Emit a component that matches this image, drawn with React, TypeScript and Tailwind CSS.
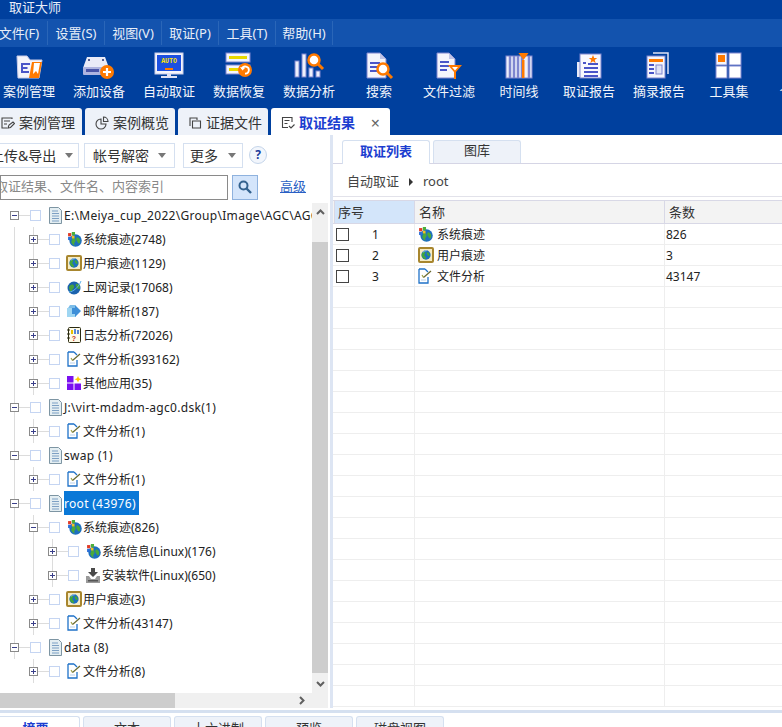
import React from "react";

const FONT = "font-['Noto_Sans','Noto_Sans_CJK_SC',sans-serif]";

function Svg({ w = 30, h = 28, vb, children }: { w?: number; h?: number; vb?: string; children: React.ReactNode }) {
  return (
    <svg width={w} height={h} viewBox={vb ?? `0 0 ${w} ${h}`} className="block shrink-0">
      {children}
    </svg>
  );
}

const P = "#4a55c8";
const O = "#ff7a00";
const F = "#7f86cf";

const ToolIcons: Record<string, React.ReactNode> = {
  case: (
    <Svg>
      <path d="M3 4h10l3 4h12l-3 18H4z" fill="#f4f4fb" stroke="#c8cbe8" />
      <path d="M18 10h10l-3 16H15z" fill={O} />
      <path d="M20 11l6 0-2 11-2-3-3 3z" fill="#fff" />
      <path d="M8 12h8M7.500 16h6M7 20h8" stroke={P} strokeWidth="2" />
      <path d="M8 11v10" stroke={P} strokeWidth="2" />
    </Svg>
  ),
  add: (
    <Svg w={34} h={28}>
      <path d="M5 5h18l4 11H1z" fill="#e9ebf8" />
      <rect x="1" y="15" width="26" height="8" rx="1" fill="#aeb4e0" />
      <rect x="4" y="17" width="13" height="3" fill="#4a55a8" />
      <rect x="6" y="7" width="2" height="2" fill="#57608f" />
      <rect x="20" y="7" width="2" height="2" fill="#57608f" />
      <circle cx="25" cy="20" r="7" fill={O} />
      <path d="M21 20h8M25 16v8" stroke="#fff" strokeWidth="2.200" />
    </Svg>
  ),
  auto: (
    <Svg>
      <rect x="1" y="1" width="28" height="21" fill="#f4f5fc" stroke="#c8cbe8" />
      <rect x="3" y="3" width="24" height="16" fill="#1d50e0" />
      <text x="15" y="11" textAnchor="middle" fontSize="6.500" fontWeight="700" fill="#ffe200" fontFamily="Liberation Mono">AUTO</text>
      <rect x="11" y="16" width="8" height="2" fill={O} />
      <rect x="13" y="22" width="4" height="2" fill="#dfe2f5" />
      <rect x="7" y="24" width="16" height="2" fill="#dfe2f5" />
    </Svg>
  ),
  recover: (
    <Svg>
      <rect x="2" y="1" width="24" height="9" fill="#f4f5fc" stroke={F} />
      <rect x="5" y="4" width="18" height="3" fill="#e8d800" />
      <rect x="2" y="13" width="24" height="9" fill="#f4f5fc" stroke={F} />
      <rect x="5" y="16" width="12" height="3" fill="#e8d800" />
      <circle cx="21" cy="18" r="7" fill={O} />
      <path d="M18 17a3.500 3.500 0 1 1 3 4.500" fill="none" stroke="#fff" strokeWidth="1.800" />
      <path d="M16 15l2.500 3.500 2.500-2.500z" fill="#fff" />
    </Svg>
  ),
  analyze: (
    <Svg w={32} h={28}>
      <rect x="2" y="9" width="4" height="16" fill="#eef0fb" stroke={F} />
      <rect x="9" y="2" width="4" height="23" fill="#eef0fb" stroke={F} />
      <rect x="16" y="16" width="4" height="9" fill="#eef0fb" stroke={F} />
      <rect x="23" y="19" width="4" height="6" fill="#eef0fb" stroke={F} />
      <circle cx="21" cy="8" r="5.500" fill="#fff" stroke={O} strokeWidth="2.500" />
      <path d="M25 12l5 5" stroke={O} strokeWidth="3" />
    </Svg>
  ),
  search: (
    <Svg>
      <path d="M3 1h13l6 6v19H3z" fill="#f4f5fc" stroke={F} />
      <path d="M16 1v6h6z" fill="#c0c4e6" />
      <path d="M6 11h10M6 15h8M6 19h8" stroke={P} strokeWidth="2" />
      <circle cx="19" cy="17" r="5.500" fill="#fff" stroke={O} strokeWidth="2.500" />
      <path d="M23 21l5 5" stroke={O} strokeWidth="3" />
    </Svg>
  ),
  filter: (
    <Svg>
      <path d="M3 1h12l6 6v19H3z" fill="#f4f5fc" stroke={F} />
      <path d="M15 1v6h6z" fill="#c0c4e6" />
      <path d="M6 10h9M6 14h9M6 18h7" stroke={P} strokeWidth="2" />
      <path d="M14 13h14l-6 7v7h-2v-7z" fill={O} />
      <path d="M18 15h6l-3 3.500z" fill="#fff" />
    </Svg>
  ),
  timeline: (
    <Svg>
      <rect x="2" y="4" width="26" height="22" fill="#eef0fb" stroke={F} />
      <path d="M6 4v22M10 4v22M14 4v22M18 4v22M25 4v22" stroke={F} strokeWidth="2.500" />
      <rect x="18" y="8" width="2.500" height="18" fill={O} />
      <path d="M14.500 1h10l-5 7z" fill={O} />
    </Svg>
  ),
  report: (
    <Svg>
      <path d="M6 10H3v15h4z" fill="#e8eaf8" />
      <rect x="6" y="2" width="21" height="24" fill="#f8f8fe" stroke={F} />
      <path d="M9 11h3" stroke={P} strokeWidth="2" />
      <path d="M14 12h10M10 16h14M10 20h14M10 24h14" stroke={P} strokeWidth="2" />
      <path d="M19 3l1.200 3h3l-2.500 2 1 3.200L19 9.300l-2.700 1.900 1-3.200L14.800 6h3z" fill={O} />
    </Svg>
  ),
  excerpt: (
    <Svg>
      <path d="M9 1h15v21" fill="none" stroke="#dfe2f5" strokeWidth="1.500" />
      <rect x="3" y="4" width="18" height="22" fill="#f4f5fc" stroke={F} />
      <rect x="5" y="7" width="14" height="3" fill={O} />
      <path d="M5 13h5M5 17h5M5 21h5" stroke={P} strokeWidth="2" />
      <rect x="12" y="13" width="6" height="9" fill="#dfe2f5" stroke={F} />
    </Svg>
  ),
  tools: (
    <Svg>
      <rect x="2" y="1" width="11" height="12" fill="#f4f5fc" stroke={F} />
      <rect x="4" y="3" width="7" height="7" fill={O} />
      <rect x="15" y="1" width="12" height="12" fill="#fff" stroke={F} />
      <rect x="2" y="14" width="11" height="12" fill="#fff" stroke={F} />
      <rect x="15" y="14" width="12" height="12" fill="#fff" stroke={F} />
    </Svg>
  ),
};

const tools: [string, string][] = [
  ["case", "案例管理"],
  ["add", "添加设备"],
  ["auto", "自动取证"],
  ["recover", "数据恢复"],
  ["analyze", "数据分析"],
  ["search", "搜索"],
  ["filter", "文件过滤"],
  ["timeline", "时间线"],
  ["report", "取证报告"],
  ["excerpt", "摘录报告"],
  ["tools", "工具集"],
];

function Globe({ size = 14 }: { size?: number }) {
  return (
    <svg width={size} height={size} viewBox="0 0 14 14" className="block shrink-0">
      <circle cx="7" cy="7" r="6.500" fill="#1d6fc0" />
      <path d="M3 3c2-1 3 0 3 1S4 6 5 8s2 1 2 3l-1 2C3 12 1 9 1 7s1-3 2-4zM9 3c2 0 3 2 3 4s-1 2-2 1-2-1-2-3 0-2 1-2z" fill="#43a63a" />
      <path d="M3 3a6 6 0 0 1 5-2" stroke="#bfe0ff" strokeWidth="1" fill="none" />
    </svg>
  );
}

const TreeIcons: Record<string, React.ReactNode> = {
  sys: (
    <svg width="15" height="15" viewBox="0 0 14 14" className="block shrink-0">
      <circle cx="8" cy="8" r="5.800" fill="#1d6fc0" />
      <path d="M5 6c2-1 3 0 3 2s-2 2-1 4-3-1-3-3zM10 5c2 1 3 3 2 5s-2 0-3-2 0-3 1-3z" fill="#49a93c" />
      <rect x="1" y="1" width="3" height="3" fill="#e23b26" />
      <rect x="4.500" y="0" width="3" height="3" fill="#4caf3c" />
      <rect x="1" y="4.500" width="3" height="3" fill="#2a6fd8" />
      <rect x="4.500" y="3.500" width="2.500" height="2.500" fill="#f4c322" />
    </svg>
  ),
  user: (
    <span className="flex h-[16px] w-[16px] shrink-0 items-center justify-center rounded-[2px] border-2 border-[#a8862e] bg-[#f6ecc4]">
      <Globe size={10} />
    </span>
  ),
  net: (
    <svg width="15" height="15" viewBox="0 0 15 15" className="block shrink-0">
      <circle cx="7" cy="8" r="6.500" fill="#1b62ad" />
      <path d="M2 7c2-3 4-3 5-1S5 9 5 11s-3 0-3-4zM9 4c3-1 4 2 4 4s-2 1-3 0-2-3-1-4z" fill="#46a03f" />
      <path d="M2 12C6 12 12 7 14 1" stroke="#5fb5ee" strokeWidth="1" fill="none" />
    </svg>
  ),
  mail: (
    <svg width="16" height="14" viewBox="0 0 16 14" className="block shrink-0">
      <path d="M2 4l2-3h5l1 3z" fill="#7dbde8" />
      <rect x="1" y="4" width="9" height="9" fill="#9fd6f2" />
      <path d="M9 1l6 6-6 6v-3H6V4h3z" fill="#3e8fd8" />
    </svg>
  ),
  log: (
    <svg width="15" height="16" viewBox="0 0 15 16" className="block shrink-0">
      <rect x="1.500" y="0.500" width="12" height="15" rx="1" fill="#fffbe8" stroke="#2a2a10" />
      <path d="M0 3h3M0 7h3M0 11h3" stroke="#2a2a10" />
      <path d="M5 3v4" stroke="#e8c000" strokeWidth="2" />
      <path d="M8 2v5" stroke="#2060d0" strokeWidth="1.500" />
      <path d="M11 3v4" stroke="#2060d0" strokeWidth="1.500" />
      <text x="7" y="14" fontSize="7" fontWeight="700" fill="#c03020" fontFamily="Liberation Sans" textAnchor="middle">?</text>
    </svg>
  ),
  file: (
    <svg width="14" height="16" viewBox="0 0 14 16" className="block shrink-0">
      <path d="M1 1h6l3 3v11H1z" fill="#fff" />
      <path d="M1 1h6M7 1l3 3M10 9v6H1V1" fill="none" stroke="#1f72c8" strokeWidth="1.300" />
      <path d="M4 7l1.500 2.500" stroke="#a0a040" strokeWidth="1.200" fill="none" />
      <path d="M5.500 9.500L13 3" stroke="#6a6a30" strokeWidth="1.200" fill="none" />
      <path d="M3 12h5" stroke="#b8d0ea" />
    </svg>
  ),
  apps: (
    <svg width="15" height="14" viewBox="0 0 15 14" className="block shrink-0">
      <rect x="0" y="0" width="6.500" height="6.500" fill="#7a10f0" />
      <rect x="0" y="7.500" width="6.500" height="6.500" fill="#7a10f0" />
      <rect x="7.500" y="7.500" width="6.500" height="6.500" fill="#7a10f0" />
      <path d="M11 0l1 2.200 2.500 1-2.500 1L11 6.500l-1-2.300-2.500-1 2.500-1z" fill="#ffcc00" />
    </svg>
  ),
  doc: (
    <svg width="13" height="17" viewBox="0 0 13 17" className="block shrink-0">
      <path d="M0.500 0.500h9l3 3v13H0.500z" fill="#e4eef2" stroke="#7d95a3" />
      <path d="M3 4h6M3 6.500h7M3 9h7M3 11.500h7M3 14h7" stroke="#7da0c4" />
    </svg>
  ),
  install: (
    <svg width="14" height="15" viewBox="0 0 14 15" className="block shrink-0">
      <path d="M5 0h4v4h3L7 9 2 4h3z" fill="#4a4a4a" />
      <path d="M0 8h3l2 3h4l2-3h3v7H0z" fill="#9a9a9a" />
      <rect x="2" y="12" width="10" height="1.500" fill="#555" />
    </svg>
  ),
};

type Node = { level: 0 | 1 | 2; open?: boolean; icon: string; text: string; sel?: boolean; guides: number[] };

const tree: Node[] = [
  { level: 0, open: true, icon: "doc", text: "E:\\Meiya_cup_2022\\Group\\Image\\AGC\\AGC0", guides: [] },
  { level: 1, icon: "sys", text: "系统痕迹(2748)", guides: [14, 33] },
  { level: 1, icon: "user", text: "用户痕迹(1129)", guides: [14, 33] },
  { level: 1, icon: "net", text: "上网记录(17068)", guides: [14, 33] },
  { level: 1, icon: "mail", text: "邮件解析(187)", guides: [14, 33] },
  { level: 1, icon: "log", text: "日志分析(72026)", guides: [14, 33] },
  { level: 1, icon: "file", text: "文件分析(393162)", guides: [14, 33] },
  { level: 1, icon: "apps", text: "其他应用(35)", guides: [14, 33] },
  { level: 0, open: true, icon: "doc", text: "J:\\virt-mdadm-agc0.dsk(1)", guides: [14] },
  { level: 1, icon: "file", text: "文件分析(1)", guides: [14, 33] },
  { level: 0, open: true, icon: "doc", text: "swap (1)", guides: [14] },
  { level: 1, icon: "file", text: "文件分析(1)", guides: [14, 33] },
  { level: 0, open: true, icon: "doc", text: "root (43976)", sel: true, guides: [14] },
  { level: 1, open: true, icon: "sys", text: "系统痕迹(826)", guides: [14, 33] },
  { level: 2, icon: "sys", text: "系统信息(Linux)(176)", guides: [14, 33, 52] },
  { level: 2, icon: "install", text: "安装软件(Linux)(650)", guides: [14, 33, 52] },
  { level: 1, icon: "user", text: "用户痕迹(3)", guides: [14, 33] },
  { level: 1, icon: "file", text: "文件分析(43147)", guides: [14, 33] },
  { level: 0, open: true, icon: "doc", text: "data (8)", guides: [14] },
  { level: 1, icon: "file", text: "文件分析(8)", guides: [33] },
];

const indent = ["pl-[10px]", "pl-[29px]", "pl-[48px]"];
const guideX: Record<number, string> = { 14: "left-[14px]", 33: "left-[33px]", 52: "left-[52px]" };

function Expander({ open }: { open?: boolean }) {
  return (
    <span className="relative z-10 flex h-[9px] w-[9px] shrink-0 items-center justify-center border border-[#8a8a8a] bg-white">
      <span className="absolute h-px w-[5px] bg-[#3a3f8a]" />
      {!open && <span className="absolute h-[5px] w-px bg-[#3a3f8a]" />}
    </span>
  );
}

function TreeRow({ n }: { n: Node }) {
  return (
    <div className={`relative flex h-6 items-center ${indent[n.level]}`}>
      {n.guides.map((g) => (
        <span key={g} className={`absolute top-0 bottom-0 w-px bg-[#dcdcdc] ${guideX[g]}`} />
      ))}
      <Expander open={n.open} />
      <span className="h-px w-[11px] shrink-0 bg-[#dcdcdc]" />
      <span className="h-[11px] w-[11px] shrink-0 border border-[#c5d5f2] bg-white" />
      <span className="flex w-[23px] shrink-0 items-center pl-[6px]">
        <span className="flex w-[16px] justify-center">{TreeIcons[n.icon]}</span>
      </span>
      <span
        className={`h-6 whitespace-nowrap text-[12px] leading-[26px] ${n.level === 0 ? "tracking-[0.3px]" : ""} ${
          n.sel ? "bg-[#0a78d7] pr-[3px] text-white" : "text-[#222]"
        }`}
      >
        {n.text}
      </span>
    </div>
  );
}

function DropBtn({ children, className }: { children: React.ReactNode; className: string }) {
  return (
    <div className={`flex h-[25px] items-center justify-between border border-[#d5e0f0] bg-white text-[14px] text-[#333] ${className}`}>
      <span className="whitespace-nowrap">{children}</span>
      <span className="h-0 w-0 border-x-[4.500px] border-t-[5px] border-x-transparent border-t-[#777]" />
    </div>
  );
}

function SmallTabIcon({ k }: { k: number }) {
  const s = { fill: "none", stroke: "#444", strokeWidth: 1.100 };
  return (
    <svg width="14" height="14" viewBox="0 0 14 14" className="block shrink-0">
      {k === 0 && (
        <>
          <path d="M11 3V2H1v10h5" {...s} />
          <path d="M3 5h6M3 8h3" {...s} />
          <path d="M7 12l1-3 4-3 1.500 1.500-4 4z" {...s} />
        </>
      )}
      {k === 1 && (
        <>
          <path d="M6 3a5 5 0 1 0 5 5H6z" {...s} />
          <path d="M8.500 1a4.500 4.500 0 0 1 4.500 4.500H8.500z" {...s} />
        </>
      )}
      {k === 2 && (
        <>
          <path d="M2 10V2h7v2" {...s} />
          <path d="M4.500 5h8v7h-8z" {...s} />
        </>
      )}
      {k === 3 && (
        <>
          <path d="M11 6V1.500H1.500v10H7" {...s} />
          <path d="M3.500 4.500h5M3.500 7.500h3" {...s} />
          <path d="M8 10l2 2 3.500-3.500" {...s} />
        </>
      )}
    </svg>
  );
}

function ArrowUp() {
  return (
    <svg width="9" height="6" viewBox="0 0 9 6">
      <path d="M1 5l3.500-3.500L8 5" fill="none" stroke="#606060" strokeWidth="2" />
    </svg>
  );
}
function ArrowDown() {
  return (
    <svg width="9" height="6" viewBox="0 0 9 6">
      <path d="M1 1l3.500 3.500L8 1" fill="none" stroke="#606060" strokeWidth="2" />
    </svg>
  );
}
function ArrowRight() {
  return (
    <svg width="6" height="9" viewBox="0 0 6 9">
      <path d="M1 1l3.500 3.500L1 8" fill="none" stroke="#606060" strokeWidth="2" />
    </svg>
  );
}

const rows: [string, string, string, string][] = [
  ["1", "sys", "系统痕迹", "826"],
  ["2", "user", "用户痕迹", "3"],
  ["3", "file", "文件分析", "43147"],
];

function GridRow({ children }: { children?: React.ReactNode }) {
  return <div className="flex h-[21px] shrink-0 border-b border-[#eeeeee] text-[12px] leading-[22px] text-[#222]">{children}</div>;
}

export default function App() {
  const empties = Array.from({ length: 20 });
  return (
    <div className={`flex h-[727px] w-[782px] flex-col overflow-hidden bg-white ${FONT}`}>
      <div className="h-[19px] shrink-0 bg-[#00409e] pl-[9px] text-[13px] leading-[15px] text-[#e8eef8]">取证大师</div>

      <div className="flex h-[28px] shrink-0 items-stretch bg-[#1353ae] text-[13px] leading-[28px] text-[#e8eef8]">
        {["文件(F)", "设置(S)", "视图(V)", "取证(P)", "工具(T)", "帮助(H)"].map((m, i) => (
          <div
            key={m}
            className={`my-[2px] flex w-[57px] shrink-0 items-center justify-center whitespace-nowrap border-r border-[#2a66b8] ${
              i === 0 ? "-ml-[9px]" : ""
            }`}
          >
            {m}
          </div>
        ))}
      </div>

      <div className="-ml-[6px] flex h-[61px] shrink-0 bg-[#00409e] pt-[5px]">
        {tools.map(([k, label]) => (
          <div key={k} className="flex w-[70px] shrink-0 flex-col items-center">
            <div className="flex h-[27px] items-center">{ToolIcons[k]}</div>
            <span className="mt-[3px] whitespace-nowrap text-[13px] leading-[18px] text-[#f2f5fb]">{label}</span>
          </div>
        ))}
        <div className="flex w-[70px] shrink-0 flex-col items-center">
          <div className="h-[27px]" />
          <span className="mt-[3px] whitespace-nowrap text-[13px] leading-[18px] text-[#f2f5fb]">个性化</span>
        </div>
      </div>

      <div className="flex h-[27px] shrink-0 items-end gap-[3px] bg-[#00409e] text-[14px]">
        {[
          ["案例管理", "-ml-[9px] w-[91px]"],
          ["案例概览", "w-[90px]"],
          ["证据文件", "w-[90px]"],
        ].map(([t, c], i) => (
          <div key={t} className={`flex h-[27px] items-center gap-[4px] rounded-t-[3px] bg-[#eef2f9] pl-[10px] pt-[2px] text-[#333] ${c}`}>
            <SmallTabIcon k={i} />
            <span className="whitespace-nowrap">{t}</span>
          </div>
        ))}
        <div className="flex h-[27px] w-[119px] items-center rounded-t-[3px] bg-white pl-[10px] pr-[10px] pt-[2px] font-bold text-[#1c3ed0]">
          <SmallTabIcon k={3} />
          <span className="ml-[4px] whitespace-nowrap">取证结果</span>
          <span className="ml-auto text-[16px] font-normal leading-none text-[#666]">×</span>
        </div>
      </div>

      <div className="flex min-h-0 flex-1">
        <div className="flex w-[330px] shrink-0 flex-col">
          <div className="flex h-[38px] shrink-0 items-center gap-[5px] pt-[2px]">
            <DropBtn className="-ml-[11px] w-[90px] pl-0 pr-[5px]">上传&amp;导出</DropBtn>
            <DropBtn className="w-[91px] px-[8px]">帐号解密</DropBtn>
            <DropBtn className="ml-[3px] w-[60px] px-[6px]">更多</DropBtn>
            <span className="ml-[1px] flex h-[18px] w-[18px] items-center justify-center rounded-full border border-[#c5d5ea] bg-[#f2f6fc] text-[12px] font-bold leading-none text-[#1c3c9c]">?</span>
          </div>
          <div className="flex h-[28px] shrink-0 items-center">
            <div className="flex h-[25px] w-[228px] items-center overflow-hidden border border-[#8a8a8a] bg-white text-[13px] text-[#888]">
              <span className="-ml-[6px] whitespace-nowrap">取证结果、文件名、内容索引</span>
            </div>
            <div className="ml-[4px] flex h-[25px] w-[26px] items-center justify-center border border-[#8fb2de] bg-[#d4e5fb]">
              <svg width="14" height="14" viewBox="0 0 14 14">
                <circle cx="5.500" cy="5.500" r="4" fill="none" stroke="#33628f" strokeWidth="2" />
                <path d="M8.500 8.500L13 13" stroke="#33628f" strokeWidth="2.400" />
              </svg>
            </div>
            <span className="ml-[22px] text-[13px] text-[#2a5fc4] underline">高级</span>
          </div>

          <div className="flex min-h-0 flex-1 flex-col pt-[2px]">
            <div className="flex min-h-0 flex-1 pr-[2px]">
              <div className="min-w-0 flex-1 overflow-hidden">
                {tree.map((n, i) => (
                  <TreeRow key={i} n={n} />
                ))}
              </div>
              <div className="flex w-[16px] shrink-0 flex-col bg-[#f0f0f0]">
                <div className="flex h-[18px] items-center justify-center">
                  <ArrowUp />
                </div>
                <div className="mt-[21px] h-[431px] bg-[#cdcdcd]" />
                <div className="mt-auto flex h-[18px] items-center justify-center">
                  <ArrowDown />
                </div>
              </div>
            </div>
            <div className="mr-[2px] flex h-[15px] shrink-0 items-center bg-[#f0f0f0]">
              <div className="h-full w-[175px] bg-[#cdcdcd]" />
              <div className="ml-[124px] flex items-center">
                <ArrowRight />
              </div>
            </div>
          </div>
        </div>

        <div className="w-[3px] shrink-0 bg-[#dde5f3]" />

        <div className="flex min-w-0 flex-1 flex-col">
          <div className="flex h-[29px] shrink-0 items-end gap-[3px] border-b border-[#d5d5e5] pl-[9px]">
            <div className="-mb-px flex h-[24px] w-[88px] items-center justify-center rounded-t-[3px] border border-b-0 border-[#d5e0f0] bg-white pb-[2px] text-[13px] font-bold text-[#1c3ed0]">取证列表</div>
            <div className="flex h-[23px] w-[88px] items-center justify-center rounded-t-[3px] border border-b-0 border-[#d5e0f0] bg-[#eef2f9] pb-[2px] text-[13px] text-[#333]">图库</div>
          </div>
          <div className="flex h-[33px] shrink-0 items-center border-b border-[#e2e2ea] pl-[14px] pt-[3px] text-[13px] text-[#444]">
            <span>自动取证</span>
            <span className="ml-[10px] h-0 w-0 border-y-[4px] border-l-[4px] border-y-transparent border-l-[#333]" />
            <span className="ml-[10px]">root</span>
          </div>
          <div className="mt-[3px] flex min-h-0 flex-1 flex-col overflow-hidden">
            <div className="flex h-[24px] shrink-0 border-y border-[#d8d8e6] bg-[#f3f3f3] text-[13px] leading-[22px] text-[#333]">
              <div className="ml-px w-[81px] shrink-0 border-x border-[#d8d8e6] bg-[#d3e5fa] pl-[3px]">序号</div>
              <div className="w-[250px] shrink-0 border-r border-[#d8d8e6] pl-[4px]">名称</div>
              <div className="flex-1 pl-[4px]">条数</div>
            </div>
            {rows.map(([n, ic, name, c]) => (
              <GridRow key={n}>
                <div className="ml-px flex w-[81px] shrink-0 items-center border-r border-[#eeeeee] pl-[2px]">
                  <span className="h-[13px] w-[13px] shrink-0 border border-[#444] bg-white" />
                  <span className="ml-[23px] pt-[2px]">{n}</span>
                </div>
                <div className="flex w-[250px] shrink-0 items-center border-r border-[#eeeeee] pl-[3px]">
                  <span className="flex w-[19px] shrink-0">{TreeIcons[ic]}</span>
                  <span className="pt-[2px]">{name}</span>
                </div>
                <div className="flex flex-1 items-center pl-px pt-[2px]">{c}</div>
              </GridRow>
            ))}
            {empties.map((_, i) => (
              <GridRow key={i}>
                <div className="ml-px w-[81px] shrink-0 border-r border-[#eeeeee]" />
                <div className="w-[250px] shrink-0 border-r border-[#eeeeee]" />
              </GridRow>
            ))}
          </div>
        </div>
      </div>

      <div className="shrink-0 pt-[2px]">
        <div className="h-[3px] bg-[#d5e0f0]" />
      </div>
      <div className="flex h-[14px] shrink-0 gap-[3px] pt-[3px] text-[13px] leading-[18px] text-[#333]">
        <div className="-ml-[9px] h-[18px] w-[89px] rounded-t-[3px] border border-b-0 border-[#d5e0f0] bg-white pt-[2px] text-center font-bold text-[#1c3ed0]">摘要</div>
        {["文本", "十六进制", "预览", "磁盘视图"].map((t) => (
          <div key={t} className="h-[18px] w-[88px] rounded-t-[3px] border border-b-0 border-[#d5e0f0] bg-[#eef2f9] pt-[2px] text-center">
            {t}
          </div>
        ))}
      </div>
    </div>
  );
}
